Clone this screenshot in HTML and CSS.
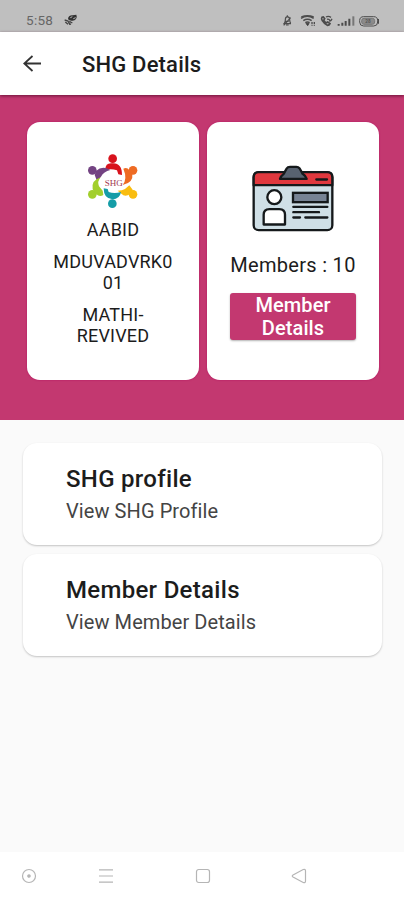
FILE: index.html
```
<!DOCTYPE html>
<html lang="en">
<head>
<meta charset="utf-8">
<title>SHG Details</title>
<link rel="stylesheet" href="styles.css">
</head>
<body>
<div class="status">
  <span class="clock">5:58</span>
  <svg class="leaf" viewBox="0 0 42 36" width="14" height="12"><path d="M12 13Q15 3 26 4L37 2Q40 8 36 15Q31 22 22 20L14 18Z" fill="#333"/><path d="M19 11l6-3M28 14l7-3" stroke="#bbb" stroke-width="3"/><path d="M2 18l10 3 5 10 4-1M4 24l8 7M16 22l9 5" stroke="#444" stroke-width="4" fill="none"/></svg>
  <svg class="sys" viewBox="0 0 300 45" width="100" height="15" fill="none" stroke="#4c4c4c" stroke-width="3">
    <path d="M4 32h23M7 31q3-5 3-11q0-8 6-9q7 1 7 9q0 6 3 11M12 36h8M5 37L26 14M16 7v5M11 25h9" stroke-width="3.5"/>
    <path d="M57 16q19-12 38 0M64 23q12-8 25 0M70 29q6-4 13 0M58 12q18-7 37 0" stroke-width="4.5"/><path d="M72 31h9l-4 7z" fill="#333"/><path d="M90 27v11M97 27v11" stroke-dasharray="6 2" stroke-width="4"/>
    <path d="M120 13q-3 4 1 10q6 10 15 14q6 0 8-5l-7-5-5 3-7-8 3-5-4-5z" stroke-width="5"/><path d="M132 12q7-4 15 1M135 19q6-2 9 4M142 25q6-2 8-8" stroke-width="4"/>
    <path d="M170 33v5M181 29v9M191 24v14M202 17v21" stroke-width="6"/><path d="M214 10v28" stroke-width="6" stroke="#777"/>
    <rect x="233" y="11" width="54" height="28" rx="12"/><rect x="239" y="16" width="39" height="18" rx="7" fill="#8b8b8b" stroke="#777"/><path d="M289 18v14" stroke-width="4"/>
    <text x="250" y="31" class="battery">28</text>
  </svg>
</div>
<header class="bar">
  <svg viewBox="0 0 18 17" width="18" height="17"><path d="M9.5 1L1.3 8.5L9.5 16M1.5 8.5H18" fill="none" stroke="#333" stroke-width="1.8"/></svg>
  <h1>SHG Details</h1>
</header>
<section class="hero">
  <div class="card group">
    <svg class="logo" viewBox="48 24 162 168" width="54" height="56">
      <g fill="#d8131d"><circle cx="128" cy="41" r="13"/><path d="M106 74Q106 52 128 55Q156 54 156 90L145 88L141 76Q125 70 106 74Z"/></g>
      <g fill="#734382"><circle cx="67" cy="76" r="13"/><path d="M78 78Q97 60 121 75Q101 80 93 95L81 108L74 90Z"/></g>
      <g fill="#ee6b23"><circle cx="189" cy="76" r="13"/><path d="M160 71Q171 65 178 76L187 87Q191 113 158 120Q173 101 160 71Z"/></g>
      <g fill="#a2cf2c"><circle cx="67" cy="148" r="13"/><path d="M92 97Q81 109 87 124L98 137L100 150Q82 160 68 133Q63 106 92 97Z"/></g>
      <g fill="#f9bd10"><circle cx="189" cy="148" r="13"/><path d="M143 137Q157 137 165 132L178 121L188 134Q179 156 160 151Z"/></g>
      <g fill="#159da7"><circle cx="127" cy="176" r="13"/><path d="M101 130L113 132L116 141Q133 147 153 141Q149 163 128 163Q101 162 101 130Z"/></g>
      <text x="131" y="122" text-anchor="middle" class="logo-text">SHG</text>
    </svg>
    <p class="name">AABID</p>
    <p class="code">MDUVADVRK0<br>01</p>
    <p class="place">MATHI-<br>REVIVED</p>
  </div>
  <div class="card members">
    <svg class="badge" viewBox="34 30 246 200" width="82" height="67" stroke="#15191b" stroke-width="7" stroke-linejoin="round" stroke-linecap="round">
      <rect x="39" y="51" width="236" height="174" rx="15" fill="#cfdfe6"/>
      <path d="M39 90V66q0-15 15-15H260q15 0 15 15V90Z" fill="#e0383e"/>
      <path d="M118 71Q121 62 129 56L138 40Q141 35 148 35H167Q173 35 177 40L186 56Q195 62 198 71Z" fill="#586270"/>
      <path d="M227 73h32M158 155h102M158 171h77M158 187h20M194 187h66"/>
      <rect x="157" y="113" width="104" height="28" fill="#778394" stroke-linejoin="miter"/>
      <circle cx="101" cy="126" r="21" fill="#fff"/>
      <path d="M69 208V179q0-17 17-17H116q17 0 17 17V208Z" fill="#fff"/>
    </svg>
    <p class="count">Members : 10</p>
    <button>Member<br>Details</button>
  </div>
</section>
<main class="list">
  <div class="item"><h2>SHG profile</h2><p>View SHG Profile</p></div>
  <div class="item"><h2>Member Details</h2><p>View Member Details</p></div>
</main>
<nav class="nav">
  <svg viewBox="0 0 16 16"><circle cx="8" cy="8" r="6.5"/><circle cx="8" cy="8" r="1.2" fill="#b5b5b5"/></svg>
  <svg viewBox="0 0 16 16"><path d="M1 1.8h14M1 8h14M1 14.2h14"/></svg>
  <svg viewBox="0 0 16 16"><rect x="1.5" y="1.5" width="13" height="13" rx="2.2"/></svg>
  <svg viewBox="0 0 16 16"><path d="M2 7L12.2 1.5Q14.5.8 14.5 3V13Q14.5 15.2 12.2 14.5L2 9Q.5 8 2 7Z"/></svg>
</nav>
</body>
</html>
```
FILE: styles.css
```
* { box-sizing: border-box; }
body { margin: 0; width: 404px; height: 900px; display: flex; flex-direction: column; overflow: hidden; background: #fafafa; color: #1c1c1c; font-family: Roboto, sans-serif; }
h1, h2, p { margin: 0; font-weight: 400; white-space: nowrap; }
svg { display: block; flex: none; }
.status { height: 32px; flex: none; background: #bfbfbf; display: flex; align-items: center; padding: 8px 22px 0 26px; }
.clock { width: 37px; font-size: 13.5px; line-height: 16px; letter-spacing: .3px; color: #666; }
.leaf { margin-left: 1px; }
.sys { margin-left: auto; }
.battery { font: 700 14px Roboto, sans-serif; fill: #555; stroke: none; }
.bar { height: 63px; flex: none; background: #fff; display: flex; align-items: center; padding-left: 23px; gap: 41px; z-index: 1; box-shadow: 0 1px 3px rgba(60, 0, 30, .65); }
h1 { font-size: 22px; font-weight: 500; letter-spacing: .18px; line-height: 26px; position: relative; top: 1px; }
.hero { height: 325px; flex: none; background: #c33870; padding: 27px 25px 40px 27px; display: flex; gap: 8px; }
.card { width: 172px; height: 258px; border-radius: 13px; background: #fff; box-shadow: 0 0 2px #b3105f; display: flex; flex-direction: column; align-items: center; text-align: center; }
.logo { margin-top: 31px; }
.logo-text { font: 400 27px "Liberation Serif", serif; fill: #a2384f; }
.group p { font-size: 18px; line-height: 21.5px; letter-spacing: .2px; }
.name { margin-top: 10px; }
.group .code, .group .place { margin-top: 10px; }
.badge { margin-top: 43px; }
.count { margin-top: 20px; font-size: 20px; line-height: 26px; letter-spacing: .3px; }
button { margin-top: 15px; width: 126px; height: 47px; border: 0; border-radius: 3px; padding: 0; background: #c33870; color: #fff; font: 500 20px/23px Roboto, sans-serif; letter-spacing: .1px; box-shadow: 0 1px 2px rgba(0, 0, 0, .3); }
.list { flex: 1; padding: 23px 22px 0 23px; display: flex; flex-direction: column; gap: 9px; }
.item { height: 102px; border-radius: 14px; background: #fff; padding: 22px 43px; box-shadow: 0 1px 2px rgba(0, 0, 0, .22); }
h2 { font-size: 24px; line-height: 28px; font-weight: 500; letter-spacing: .3px; }
.item p { margin-top: 6px; font-size: 20px; line-height: 24px; letter-spacing: .08px; color: #444; }
.nav { height: 48px; flex: none; background: #fff; display: grid; grid-template-columns: 77px 97px 96px 16px; align-items: center; padding-left: 21px; }
.nav svg { width: 16px; height: 16px; fill: none; stroke: #b5b5b5; stroke-width: 1.2; }
```
